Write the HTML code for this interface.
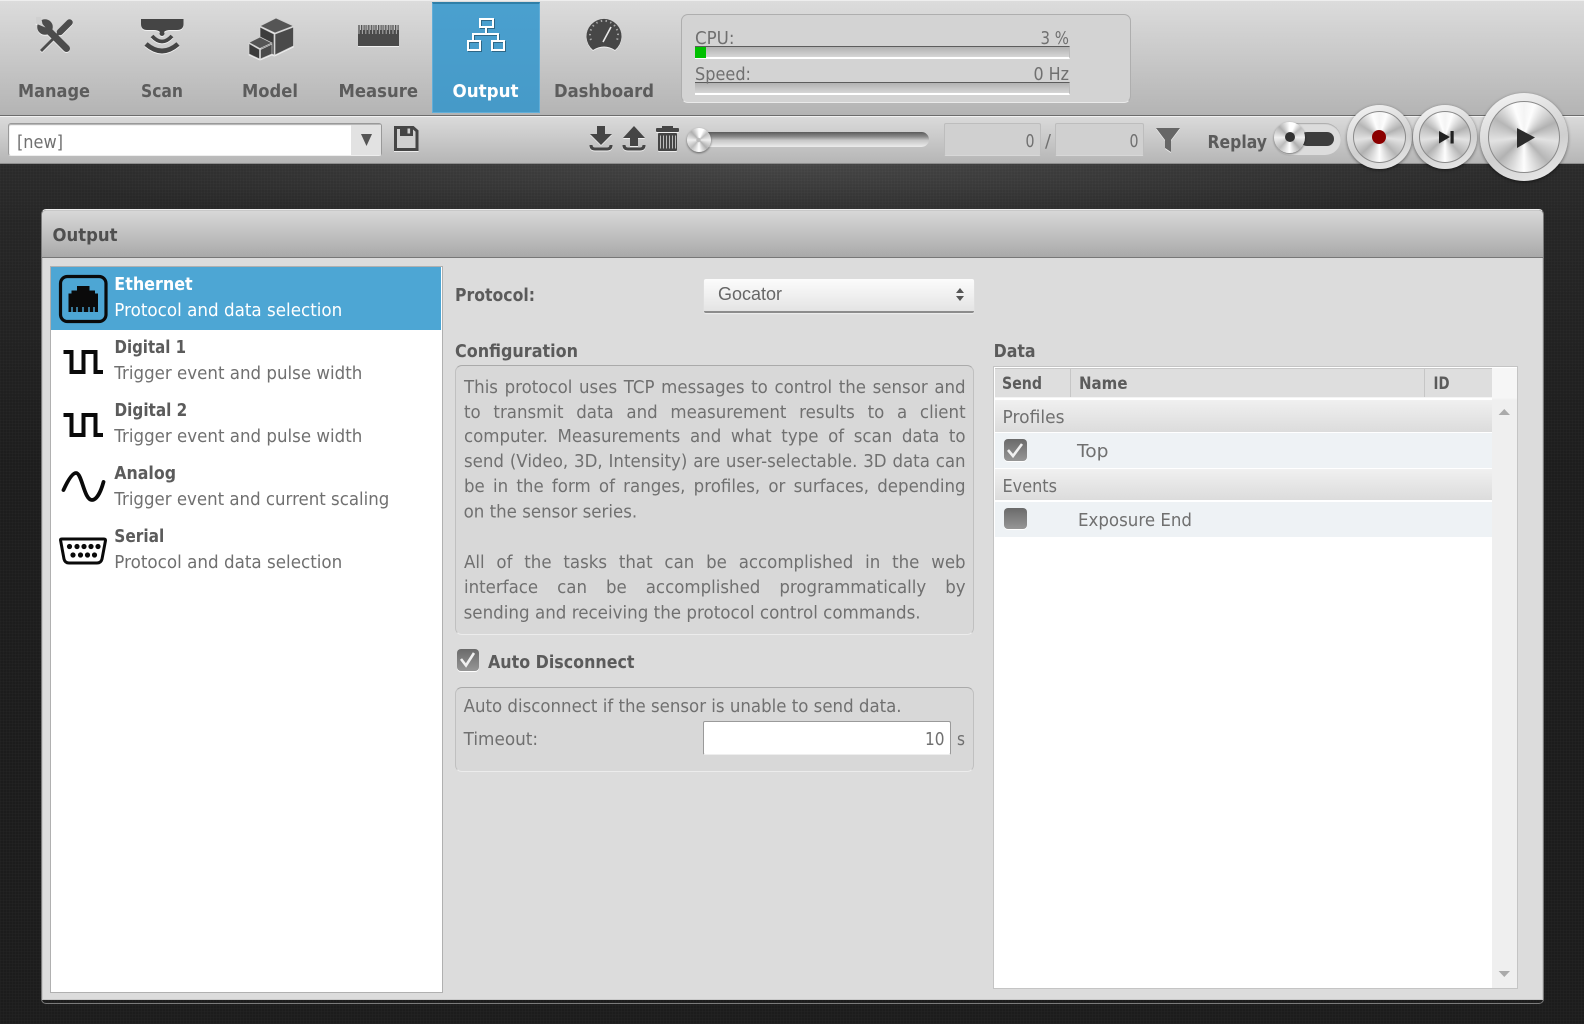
<!DOCTYPE html>
<html><head><meta charset="utf-8"><title>Output</title>
<style>
html,body{margin:0;padding:0;width:1584px;height:1024px;overflow:hidden;background:#1f1f1f;}
body{position:relative;font-family:"DejaVu Sans","Liberation Sans",sans-serif;}
div{position:absolute;box-sizing:border-box;}
#bg{left:0;top:163px;width:1584px;height:861px;background:
repeating-linear-gradient(90deg,rgba(255,255,255,.016) 0 1px,transparent 1px 3px),
repeating-linear-gradient(0deg,rgba(255,255,255,.016) 0 1px,transparent 1px 3px),
radial-gradient(ellipse 760px 70px at 50% 0,rgba(255,255,255,.13),rgba(255,255,255,0) 100%),
linear-gradient(180deg,#2b2b2b 0,#262626 60px,#1d1d1d 300px,#1c1c1c 100%);}
#top{left:0;top:0;width:1584px;height:116px;background:linear-gradient(180deg,#dcdcdc 0,#d4d4d4 20%,#b4b4b4 100%);border-top:1px solid #eee;border-bottom:1px solid #6d6d6d;}
#bar2{left:0;top:116px;width:1584px;height:48px;background:linear-gradient(180deg,#dadada 0,#b6b6b6 100%);border-top:1px solid #f2f2f2;border-bottom:1px solid #8e8e8e;}
#tab{left:432px;top:2px;width:108px;height:111px;background:linear-gradient(180deg,#4aa0cf,#469ac8);border:1px solid #62aed8;border-top:2px solid #2f7fa8;}
#cpu{left:681px;top:14px;width:450px;height:89px;background:#d3d3d3;border:1px solid #aeaeae;border-bottom:1px solid #eaeaea;border-radius:7px;}
.bar{left:695px;width:375px;height:13px;background:linear-gradient(180deg,#b2b2b2,#d6d6d6);border-top:1px solid #5c5c5c;border-bottom:2px solid #fff;border-right:1px solid #bbb;}
#sel{left:8px;top:123px;width:374px;height:33px;background:#fff;border:1px solid #999;border-bottom:1px solid #eee;border-radius:3px;box-shadow:inset 0 1px 1px #aaa;}
#selb{left:351px;top:125px;width:30px;height:30px;background:#e2e2e2;}
.inp{top:123px;height:33px;background:#d0d0d0;border:1px solid #bdbdbd;border-bottom:1px solid #d8d8d8;border-radius:2px;}
#track{left:692px;top:132px;width:237px;height:15px;border-radius:8px;background:linear-gradient(180deg,#5a5a5a 0,#888 30%,#c6c6c6 55%,#ececec 100%);}
.knob{border-radius:50%;background:conic-gradient(#fff 0 6%,#bcbcbc 14%,#efefef 25%,#b0b0b0 38%,#fff 50%,#bcbcbc 62%,#efefef 75%,#b0b0b0 88%,#fff);box-shadow:0 1px 2px rgba(0,0,0,.5);}
#tog{left:1274px;top:123px;width:67px;height:32px;border-radius:16px;background:#dcdcdc;box-shadow:inset 0 1px 1px #a8a8a8;}
#slot{left:1300px;top:132px;width:34px;height:14px;border-radius:7px;background:#3d3d3d;}
.btn{border-radius:50%;background:linear-gradient(160deg,#f6f6f6,#cfcfcf 60%,#ececec);box-shadow:0 1px 3px rgba(0,0,0,.5);}
.btn div{border-radius:50%;background:conic-gradient(#f4f4f4 0,#fdfdfd 5%,#b2b2b2 18%,#e2e2e2 27%,#b6b6b6 38%,#fdfdfd 50%,#b2b2b2 63%,#e2e2e2 73%,#b6b6b6 84%,#fdfdfd 95%,#f4f4f4);border:1px solid #8a8a8a;}
#panel{left:42px;top:210px;width:1501px;height:790px;background:#dcdcdc;border:1px solid #c8c8c8;border-radius:4px 4px 0 0;}
#edge{left:41px;top:209px;width:1503px;height:795px;border:1px solid #7a7a7a;border-top:1px solid #eee;border-radius:5px;}
#head{left:42px;top:211px;width:1501px;height:47px;background:linear-gradient(180deg,#d8d8d8,#a9a9a9);border-bottom:1px solid #777;border-radius:4px 4px 0 0;}
#list{left:50px;top:266px;width:393px;height:727px;background:#fff;border:1px solid #b0b0b0;}
#lsel{left:51px;top:267px;width:390px;height:63px;background:#4da6d4;}
.box{left:455px;width:519px;background:#d8d8d8;border:1px solid #c0c0c0;border-top:1px solid #aaa;border-bottom:1px solid #ececec;border-radius:7px;}
#psel{left:704px;top:279px;width:270px;height:34px;background:linear-gradient(180deg,#fcfcfc,#e4e4e4);border-bottom:2px solid #8c8c8c;border-radius:2px;box-shadow:0 1px 1px #eee;}
#tinp{left:703px;top:721px;width:248px;height:34px;background:#fff;border:1px solid #9a9a9a;border-bottom:1px solid #eee;border-radius:2px;}
#tbl{left:993px;top:366px;width:525px;height:623px;background:#fff;border:1px solid #c4c4c4;}
#th{left:995px;top:368px;width:497px;height:30px;background:#dedede;border-top:1px solid #c8c8c8;border-bottom:1px solid #f4f4f4;}
.sep{top:369px;width:1px;height:28px;background:#c6c6c6;}
#sb{left:1492px;top:368px;width:25px;height:620px;background:linear-gradient(180deg,#f6f6f6 0,#f6f6f6 30px,#efefef 32px);}
.grp{left:995px;width:497px;height:32px;background:linear-gradient(180deg,#f0f0f0,#dcdcdc);}
.row{left:995px;width:497px;height:35px;background:#eef2f5;}
.cb{background:linear-gradient(180deg,#6a6a6a,#969696);border-radius:4px;box-shadow:0 1px 0 #fff;}
.j{left:464px;width:528px;height:24px;font-size:17.5px;line-height:24px;color:#707070;text-align:justify;text-align-last:justify;white-space:nowrap;transform:scaleX(.95);transform-origin:0 0;}
svg{position:absolute;left:0;top:0;}
text{font-family:"DejaVu Sans","Liberation Sans",sans-serif;font-size:17.5px;fill:#707070;}
text.b{font-weight:bold;fill:#5b5b5b;}
text.nav{font-weight:bold;font-size:18px;fill:#5c5c5c;}
</style></head><body>
<div id="bg"></div>
<div id="top"></div>
<div id="bar2"></div>
<div id="tab"></div>
<div id="cpu"></div>
<div class="bar" style="top:46px"></div>
<div style="left:695px;top:47px;width:11px;height:11px;background:#00c000"></div>
<div class="bar" style="top:82px"></div>
<div id="sel"></div><div id="selb"></div>
<div id="track"></div>
<div class="knob" style="left:687px;top:128px;width:24px;height:24px"></div>
<div class="inp" style="left:944px;width:97px"></div>
<div class="inp" style="left:1055px;width:89px"></div>
<div id="tog"></div><div id="slot"></div>
<div class="knob" style="left:1274px;top:122px;width:31px;height:31px"></div>
<div style="left:1285px;top:132px;width:10px;height:10px;border-radius:50%;background:#333"></div>
<div class="btn" style="left:1347px;top:105px;width:65px;height:64px"><div style="left:6px;top:6px;width:53px;height:52px"></div></div>
<div class="btn" style="left:1413px;top:105px;width:64px;height:64px"><div style="left:6px;top:6px;width:52px;height:52px"></div></div>
<div class="btn" style="left:1480px;top:93px;width:88px;height:88px"><div style="left:8px;top:8px;width:72px;height:72px"></div></div>

<div id="edge"></div>
<div id="panel"></div>
<div id="head"></div>
<div id="list"></div>
<div id="lsel"></div>
<div id="psel"></div>
<div class="box" style="top:365px;height:270px"></div>
<div class="box" style="top:687px;height:85px"></div>
<div id="tinp"></div>
<div class="cb" style="left:457px;top:649px;width:22px;height:22px"></div>
<div id="tbl"></div>
<div id="sb"></div>
<div id="th"></div>
<div class="sep" style="left:1070px"></div>
<div class="sep" style="left:1424px"></div>
<div class="grp" style="top:400px"></div>
<div class="row" style="top:433px"></div>
<div class="grp" style="top:469px;height:31px"></div>
<div class="row" style="top:502px"></div>
<div class="cb" style="left:1004px;top:439px;width:23px;height:22px"></div>
<div class="cb" style="left:1004px;top:508px;width:23px;height:21px"></div>

<div class="j" style="top:376px">This protocol uses TCP messages to control the sensor and</div>
<div class="j" style="top:401px">to transmit data and measurement results to a client</div>
<div class="j" style="top:425px">computer. Measurements and what type of scan data to</div>
<div class="j" style="top:450px">send (Video, 3D, Intensity) are user-selectable. 3D data can</div>
<div class="j" style="top:475px">be in the form of ranges, profiles, or surfaces, depending</div>
<div class="j" style="top:551px">All of the tasks that can be accomplished in the web</div>
<div class="j" style="top:576px">interface can be accomplished programmatically by</div>

<svg width="1584" height="1024" viewBox="0 0 1584 1024" xmlns="http://www.w3.org/2000/svg">
<!-- nav labels -->
<text class="nav" x="18" y="97" textLength="72" lengthAdjust="spacingAndGlyphs">Manage</text>
<text class="nav" x="141" y="97" textLength="42" lengthAdjust="spacingAndGlyphs">Scan</text>
<text class="nav" x="242" y="97" textLength="56" lengthAdjust="spacingAndGlyphs">Model</text>
<text class="nav" x="338.5" y="97" textLength="79.5" lengthAdjust="spacingAndGlyphs">Measure</text>
<text class="nav" x="452.5" y="97" textLength="66" lengthAdjust="spacingAndGlyphs" style="fill:#fff">Output</text>
<text class="nav" x="554" y="97" textLength="100" lengthAdjust="spacingAndGlyphs">Dashboard</text>

<!-- nav icons -->
<g style="filter:drop-shadow(0 1px 0 rgba(255,255,255,.7))">
 <!-- tools -->
 <path d="M41 51 L58 34" stroke="#4c4c4c" stroke-width="2.8" fill="none"/>
 <path d="M60 32 L69.5 22.5" stroke="#4c4c4c" stroke-width="6.5" stroke-linecap="round" fill="none"/>
 <path d="M47 29 L66.5 48.5" stroke="#4c4c4c" stroke-width="7" stroke-linecap="round" fill="none"/>
 <circle cx="45" cy="27" r="7.8" fill="#4c4c4c"/>
 <polygon points="41,17 42.5,24 45.5,27.5 35.5,23.5 36,17" fill="#d0d0d0"/>
 <!-- scan -->
 <path d="M141 19 H183.5 V24 Q183.5 30 177 30 H170 Q166 30 164 32 H160 Q158 30 154 30 H147 Q141 30 141 24 Z" fill="#454545"/>
 <circle cx="162" cy="33.5" r="2.5" fill="#454545"/>
 <path d="M152 36 Q162 47 172 36" stroke="#454545" stroke-width="3.8" fill="none"/>
 <path d="M146 44 Q162 58 178 44" stroke="#454545" stroke-width="4.8" fill="none"/>
 <!-- model -->
 <g stroke="#cfcfcf" stroke-width=".7">
 <polygon points="276,18 293.5,26 275,33 260,26" fill="#555"/>
 <polygon points="260,27 274,34 274,55 260,48" fill="#3c3c3c"/>
 <polygon points="275,34 293.5,27 293.5,46 275,55" fill="#4a4a4a"/>
 <polygon points="260,37 272,43 260,48.5 249,42.5" fill="#555"/>
 <polygon points="249,43.5 259.5,49.5 259.5,59 249,54" fill="#3c3c3c"/>
 <polygon points="260.5,49.5 272,44 272,54 260.5,59" fill="#4a4a4a"/>
 </g>
 <!-- measure -->
 <rect x="358" y="25" width="41" height="21" fill="#4a4a4a"/>
 <path d="M358.5 29.5 H399" stroke="#cfcfcf" stroke-width="9" stroke-dasharray="1 2.4" fill="none" opacity=".75"/>
 <path d="M360 27.5 H399" stroke="#c4c4c4" stroke-width="5" stroke-dasharray="1 2.4" fill="none"/>
 <!-- dashboard -->
 <path d="M593 50 A17.5 17.5 0 1 1 615 50 Q604 43 593 50 Z" fill="#474747"/>
 <path d="M603 42 L611 27" stroke="#e8e8e8" stroke-width="1.6" fill="none"/>
 <path d="M591 40 A14 14 0 1 1 617 40" stroke="#a8a8a8" stroke-width="2" stroke-dasharray="1.4 3.4" fill="none"/>
</g>
<!-- output icon -->
<g fill="none" stroke="#fff" stroke-width="2" style="filter:drop-shadow(1px 1px 0 rgba(0,0,0,.35))">
 <rect x="480" y="19" width="13" height="8"/>
 <path d="M486 27 V34 M473 40 V34 H498 V40"/>
 <rect x="468" y="41" width="12" height="9"/>
 <rect x="492" y="41" width="12" height="9"/>
</g>

<text x="695" y="44" textLength="39.5" lengthAdjust="spacingAndGlyphs">CPU:</text>
<text x="1040.5" y="44" textLength="28.5" lengthAdjust="spacingAndGlyphs">3 %</text>
<text x="695" y="80" textLength="56" lengthAdjust="spacingAndGlyphs">Speed:</text>
<text x="1033.5" y="80" textLength="35.5" lengthAdjust="spacingAndGlyphs">0 Hz</text>

<text x="17" y="148" textLength="46" lengthAdjust="spacingAndGlyphs">[new]</text>
<polygon points="361,134 372,134 366.5,146" fill="#555"/>
<!-- toolbar icons -->
<g style="filter:drop-shadow(0 1px 0 rgba(255,255,255,.7))">
 <path d="M395.5 127.5 H413 L417 131 V149.5 H395.5 Z" fill="#d0d0d0" stroke="#454545" stroke-width="3"/>
 <rect x="400" y="127" width="13" height="9" fill="#454545"/>
 <rect x="407.5" y="128.5" width="2.6" height="5" fill="#d0d0d0"/>
 <path d="M597 126 H605 V134 H612 L601 145 L590 134 H597 Z" fill="#454545"/>
 <path d="M591 145 Q591 149 595 149 H607 Q611 149 611 145" stroke="#454545" stroke-width="3" fill="none"/>
 <path d="M630 138 H638 V146 H630 Z M623 138 L634 126 L645 138 Z" fill="#454545"/>
 <path d="M624 145 Q624 149 628 149 H640 Q644 149 644 145" stroke="#454545" stroke-width="3" fill="none"/>
 <rect x="656" y="128" width="23" height="4" rx="1" fill="#454545"/>
 <rect x="662" y="126" width="11" height="3" fill="#454545"/>
 <rect x="658" y="133" width="19" height="18" rx="1" fill="#454545"/>
 <path d="M660 135 H676" stroke="#bbb" stroke-width="13" stroke-dasharray="1 2" fill="none" transform="translate(0 7)"/>
 <polygon points="1156,128 1180,128 1171,140 1171,152 1165,148 1165,140" fill="#666"/>
</g>
<circle cx="698.5" cy="140" r="2.2" fill="#bbb"/>
<text x="1025.5" y="147" textLength="9" lengthAdjust="spacingAndGlyphs">0</text>
<text x="1045" y="147" textLength="6" lengthAdjust="spacingAndGlyphs">/</text>
<text x="1129.5" y="147" textLength="9" lengthAdjust="spacingAndGlyphs">0</text>
<text class="b" x="1207.5" y="148" textLength="59.5" lengthAdjust="spacingAndGlyphs">Replay</text>
<!-- transport -->
<circle cx="1379" cy="137" r="7" fill="#8b0000"/>
<polygon points="1439,131 1439,143.5 1450,137" fill="#222"/>
<rect x="1450.5" y="131" width="3.2" height="12.5" fill="#222"/>
<polygon points="1517,128 1517,148 1535,137.5" fill="#2b2b2b"/>

<text class="b" x="52.5" y="241" textLength="65" lengthAdjust="spacingAndGlyphs" style="font-size:18px;fill:#4f4f4f">Output</text>

<!-- list -->
<text class="b" x="114.3" y="290" textLength="78.4" lengthAdjust="spacingAndGlyphs" style="fill:#fff">Ethernet</text>
<text x="114.3" y="316" textLength="228" lengthAdjust="spacingAndGlyphs" style="fill:#fff">Protocol and data selection</text>
<text class="b" x="114.5" y="353" textLength="71.5" lengthAdjust="spacingAndGlyphs">Digital 1</text>
<text x="114.3" y="379" textLength="248" lengthAdjust="spacingAndGlyphs">Trigger event and pulse width</text>
<text class="b" x="114.5" y="416" textLength="72.8" lengthAdjust="spacingAndGlyphs">Digital 2</text>
<text x="114.3" y="442" textLength="248" lengthAdjust="spacingAndGlyphs">Trigger event and pulse width</text>
<text class="b" x="114.3" y="479" textLength="61.7" lengthAdjust="spacingAndGlyphs">Analog</text>
<text x="114.3" y="505" textLength="275" lengthAdjust="spacingAndGlyphs">Trigger event and current scaling</text>
<text class="b" x="114.3" y="542" textLength="50" lengthAdjust="spacingAndGlyphs">Serial</text>
<text x="114.3" y="568" textLength="228" lengthAdjust="spacingAndGlyphs">Protocol and data selection</text>

<!-- list icons -->
<rect x="60.5" y="276.5" width="45.5" height="45" rx="7" fill="none" stroke="#0a0a0a" stroke-width="3.2"/>
<path d="M77 286 H89.5 V290.5 H95 V293.5 H98 V312 H68.5 V293.5 H71.5 V290.5 H77 Z" fill="#0a0a0a"/>
<path d="M72 312 V307 M77 312 V307 M83 312 V307 M89 312 V307 M94 312 V307" stroke="#4da6d4" stroke-width="1.4" fill="none"/>
<g fill="none" stroke="#0a0a0a" stroke-width="4">
 <path d="M63.5 352 H71.5 V372 H83.5 V352 H95.5 V372 H103"/>
 <path d="M63.5 415 H71.5 V435 H83.5 V415 H95.5 V435 H103"/>
</g>
<path d="M63.5 490 C69 478 73 473 76 473 C82 473 84 500 92 500 C97 500 101 491 103.5 482" fill="none" stroke="#0a0a0a" stroke-width="3.8" stroke-linecap="round"/>
<path d="M60.5 540 Q60.5 539 62 539 H104 Q105.5 539 105.5 540.5 L102 559 Q101 563 97 563 H69 Q65 563 64 559 Z" fill="#fff" stroke="#0a0a0a" stroke-width="3"/>
<g fill="#0a0a0a">
 <circle cx="69.5" cy="546.5" r="2.6"/><circle cx="77" cy="546.5" r="2.6"/><circle cx="84" cy="546.5" r="2.6"/><circle cx="91" cy="546.5" r="2.6"/><circle cx="98" cy="546.5" r="2.6"/>
 <circle cx="73" cy="555" r="2.6"/><circle cx="80.5" cy="555" r="2.6"/><circle cx="87.5" cy="555" r="2.6"/><circle cx="94.5" cy="555" r="2.6"/>
</g>

<!-- center -->
<text class="b" x="455" y="301" textLength="80" lengthAdjust="spacingAndGlyphs">Protocol:</text>
<text x="718" y="300" textLength="64" lengthAdjust="spacingAndGlyphs" style="font-family:'Liberation Sans',sans-serif;font-size:18px;fill:#666">Gocator</text>
<polygon points="960,288 964,293 956,293" fill="#555"/><polygon points="960,301 964,296 956,296" fill="#555"/>
<text class="b" x="455" y="357" textLength="123" lengthAdjust="spacingAndGlyphs">Configuration</text>
<text x="463.6" y="517.5" textLength="173.6" lengthAdjust="spacingAndGlyphs">on the sensor series.</text>
<text x="463.6" y="618.5" textLength="457" lengthAdjust="spacingAndGlyphs">sending and receiving the protocol control commands.</text>
<path d="M461 659 L466 665.5 L474 653" fill="none" stroke="#f0f0f0" stroke-width="2.6"/>
<text class="b" x="488" y="668" textLength="146.5" lengthAdjust="spacingAndGlyphs">Auto Disconnect</text>
<text x="463.6" y="712" textLength="438" lengthAdjust="spacingAndGlyphs">Auto disconnect if the sensor is unable to send data.</text>
<text x="463.6" y="745" textLength="74.5" lengthAdjust="spacingAndGlyphs">Timeout:</text>
<text x="925" y="745" textLength="19.5" lengthAdjust="spacingAndGlyphs">10</text>
<text x="957" y="745" textLength="8" lengthAdjust="spacingAndGlyphs">s</text>

<!-- data -->
<text class="b" x="993.6" y="357" textLength="42" lengthAdjust="spacingAndGlyphs">Data</text>
<text class="b" x="1002" y="389" textLength="40" lengthAdjust="spacingAndGlyphs" style="font-size:17px">Send</text>
<text class="b" x="1079" y="389" textLength="48.5" lengthAdjust="spacingAndGlyphs" style="font-size:17px">Name</text>
<text class="b" x="1433.5" y="389" textLength="16" lengthAdjust="spacingAndGlyphs" style="font-size:17px">ID</text>
<text x="1002.5" y="423" textLength="62" lengthAdjust="spacingAndGlyphs">Profiles</text>
<path d="M1008 450 L1013 456 L1022 444" fill="none" stroke="#f0f0f0" stroke-width="2.6"/>
<text x="1077" y="457" textLength="31.5" lengthAdjust="spacingAndGlyphs">Top</text>
<text x="1002.5" y="492" textLength="54.5" lengthAdjust="spacingAndGlyphs">Events</text>
<text x="1078" y="526" textLength="114" lengthAdjust="spacingAndGlyphs">Exposure End</text>
<polygon points="1504.3,409 1510,415 1498.6,415" fill="#aaa"/>
<polygon points="1504.3,977 1510,971 1498.6,971" fill="#aaa"/>
</svg>
</body></html>
